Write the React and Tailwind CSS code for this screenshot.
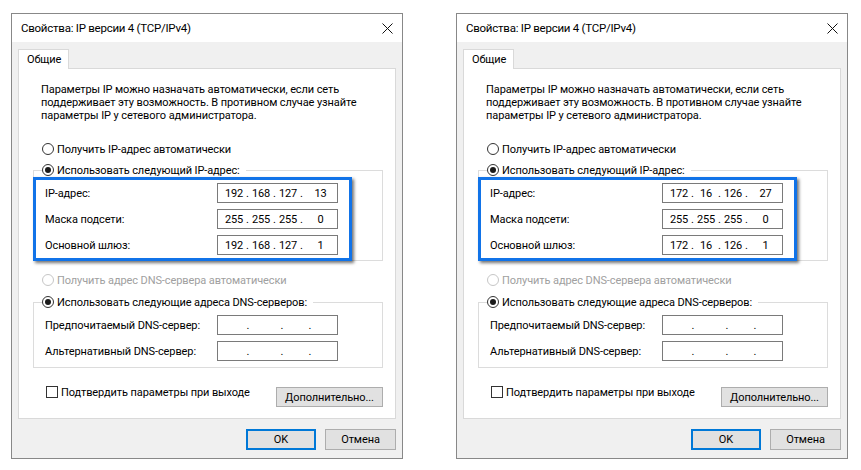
import React from 'react';

const dialogs = [
  {
    ip: ['192', '168', '127', '13'],
    mask: ['255', '255', '255', '0'],
    gateway: ['192', '168', '127', '1'],
  },
  {
    ip: ['172', '16', '126', '27'],
    mask: ['255', '255', '255', '0'],
    gateway: ['172', '16', '126', '1'],
  },
];

const Radio = ({ checked, disabled }) => (
  <span
    className={`w-[12px] h-[12px] rounded-full border flex items-center justify-center bg-white shrink-0 ${
      disabled ? 'border-[#c6c6c6]' : 'border-[#333333]'
    }`}
  >
    {checked && <span className="w-[6px] h-[6px] rounded-full bg-[#1a1a1a]" />}
  </span>
);

const IpBox = ({ parts }) => {
  if (!parts) {
    // empty address field: only the dots
    return (
      <div className="w-[121px] h-[20px] border border-[#7a7a7a] bg-white flex items-center shrink-0">
        <span className="w-[28px]" />
        <span className="w-[4px] text-center">.</span>
        <span className="w-[30px]" />
        <span className="w-[4px] text-center">.</span>
        <span className="w-[24px]" />
        <span className="w-[4px] text-center">.</span>
      </div>
    );
  }
  return (
    <div className="w-[121px] h-[20px] border border-[#7a7a7a] bg-white flex items-center pl-[5px] shrink-0">
      <span className="w-[22px] text-center">{parts[0]}</span>
      <span className="w-[5px] text-center">.</span>
      <span className="w-[22px] text-center">{parts[1]}</span>
      <span className="w-[5px] text-center">.</span>
      <span className="w-[22px] text-center">{parts[2]}</span>
      <span className="w-[5px] text-center">.</span>
      <span className="flex-1 text-center">{parts[3]}</span>
    </div>
  );
};

const Dialog = ({ data }) => (
  <div className="w-[392px] h-[446px] border border-[#888888] flex flex-col bg-[#f0f0f0]">
    {/* Title bar */}
    <div className="h-[28px] bg-white flex items-center justify-between pl-[9px] pr-[8px]">
      <span className="text-[11.5px] tracking-[-0.25px]">Свойства: IP версии 4 (TCP/IPv4)</span>
      <svg width="11" height="11" viewBox="0 0 11 11" className="mr-[1px]">
        <path d="M0.5 0.5 L10.5 10.5 M10.5 0.5 L0.5 10.5" stroke="#111" strokeWidth="1" />
      </svg>
    </div>

    {/* Body */}
    <div className="flex-1 px-[6px] pt-[7px] flex flex-col">
      <div className="relative z-10 w-[51px] h-[20px] mb-[-1px] bg-white border border-b-0 border-[#d9d9d9] flex items-center pl-[8px]">
        Общие
      </div>

      <div className="w-[378px] h-[351px] bg-white border border-[#d9d9d9] pl-[14px] pr-[11px] flex flex-col whitespace-nowrap">
        <p className="pt-[14px] pl-[8px]">
          Параметры IP можно назначать автоматически, если сеть
          <br />
          поддерживает эту возможность. В противном случае узнайте
          <br />
          параметры IP у сетевого администратора.
        </p>

        <div className="mt-[17px] h-[20px] pl-[9px] flex items-center gap-[3px]">
          <Radio />
          <span>Получить IP-адрес автоматически</span>
        </div>

        <fieldset className="mt-[1px] w-[350px] border border-[#dcdcdc]">
          <legend className="ml-[8px] pr-[6px] h-[20px] flex items-center gap-[3px]">
            <Radio checked />
            <span>Использовать следующий IP-адрес:</span>
          </legend>

          {/* highlighted block */}
          <div className="relative mt-[-3px] ml-[-1px] mb-[-1px] w-[319px] border-[3px] border-[#1173e8] shadow-[2px_2px_3px_rgba(0,0,0,0.55)] pl-[9px]">
            <div className="h-[26px] flex items-center">
              <span className="w-[172px]">IP-адрес:</span>
              <IpBox parts={data.ip} />
            </div>
            <div className="h-[26px] flex items-center">
              <span className="w-[172px]">Маска подсети:</span>
              <IpBox parts={data.mask} />
            </div>
            <div className="h-[26px] flex items-center">
              <span className="w-[172px]">Основной шлюз:</span>
              <IpBox parts={data.gateway} />
            </div>
          </div>
        </fieldset>

        <div className="mt-[9px] h-[20px] pl-[9px] flex items-center gap-[3px] text-[#a0a0a0]">
          <Radio disabled />
          <span>Получить адрес DNS-сервера автоматически</span>
        </div>

        <fieldset className="mt-[2px] w-[350px] border border-[#dcdcdc] pl-[11px] pb-[3px]">
          <legend className="ml-[-3px] pr-[6px] h-[20px] flex items-center gap-[3px]">
            <Radio checked />
            <span>Использовать следующие адреса DNS-серверов:</span>
          </legend>
          <div className="h-[26px] flex items-center">
            <span className="w-[172px]">Предпочитаемый DNS-сервер:</span>
            <IpBox />
          </div>
          <div className="h-[26px] flex items-center">
            <span className="w-[172px]">Альтернативный DNS-сервер:</span>
            <IpBox />
          </div>
        </fieldset>

        <div className="mt-[14px] flex items-start pl-[13px] pr-[1px]">
          <div className="h-[20px] flex items-center gap-[3px]">
            <span className="w-[12px] h-[12px] border border-[#333333] bg-white" />
            <span>Подтвердить параметры при выходе</span>
          </div>
          <button className="ml-auto mt-[5px] w-[107px] h-[20px] bg-[#e1e1e1] border border-[#adadad] flex items-center justify-center">
            Дополнительно...
          </button>
        </div>
      </div>

      <div className="mt-[10px] flex justify-end gap-[9px]">
        <button className="w-[70px] h-[21px] bg-[#e1e1e1] border-2 border-[#0078d7] flex items-center justify-center">
          OK
        </button>
        <button className="w-[71px] h-[21px] bg-[#e1e1e1] border border-[#adadad] flex items-center justify-center">
          Отмена
        </button>
      </div>
    </div>
  </div>
);

export default function App() {
  return (
    <div className="w-[861px] h-[470px] bg-white pt-[13px] pl-[11px] flex gap-[53px] items-start font-['Roboto',sans-serif] text-[11px] tracking-[-0.1px] leading-[13px] text-black">
      {dialogs.map((d, i) => (
        <Dialog key={i} data={d} />
      ))}
    </div>
  );
}
